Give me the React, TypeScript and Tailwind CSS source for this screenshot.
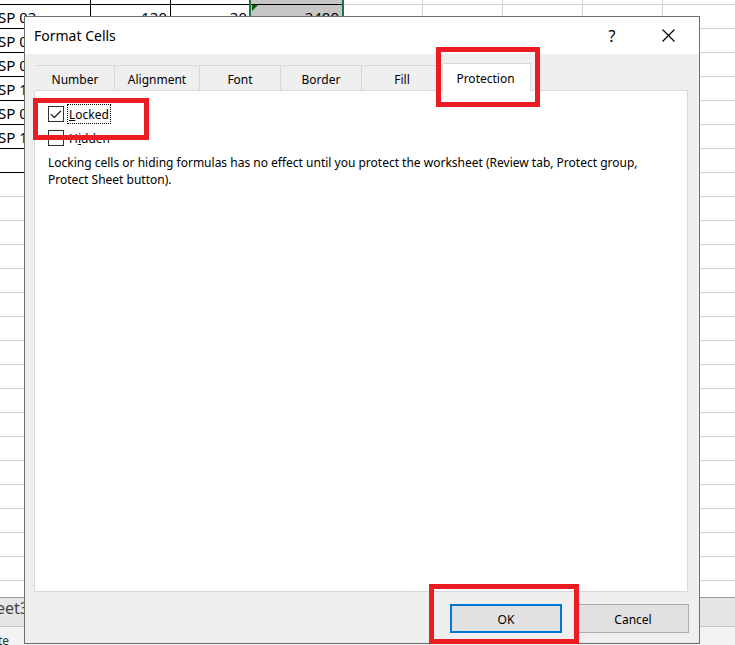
import { useState } from "react"
import clsx from "clsx"

const tabs = [
  { name: "Number", width: "w-[79px]" },
  { name: "Alignment", width: "w-[85px]" },
  { name: "Font", width: "w-[81px]" },
  { name: "Border", width: "w-[81px]" },
  { name: "Fill", width: "w-[81px]" },
  { name: "Protection", width: "w-[88px]" },
]

const codes = ["", "SP 02", "SP 0", "SP 0", "SP 1", "SP 0", "SP 1", ""]
const amounts = ["", "120"]
const prices = ["", "20"]
const totals = ["", "2400"]
const rows = Array.from({ length: 25 }, (_, i) => i)

function Mark({ className }: { className: string }) {
  return <div className={clsx("absolute z-10 border-[5px] border-[#ed1c24] pointer-events-none", className)} />
}

function Sheet() {
  return <table className="w-full table-fixed border-separate border-spacing-0 text-[15px] leading-[22px]">
    <colgroup>
      <col className="w-[91px]" />
      <col className="w-20" />
      <col className="w-20" />
      <col className="w-[92px]" />
      <col className="w-20" />
      <col className="w-20" />
      <col className="w-20" />
      <col className="w-20" />
      <col />
    </colgroup>
    <tbody>
      {rows.map(i => {
        const filled = i < codes.length
        const cell = clsx(
          "p-0 border-r border-b whitespace-nowrap",
          i === 0 ? "h-[5px]" : "h-6 pt-px",
          filled ? "border-black" : "border-[#d4d4d4]"
        )
        const empty = "p-0 border-r border-b border-[#d4d4d4]"
        return <tr key={i}>
          <td className={cell}><div className="-ml-0.5">{codes[i]}</div></td>
          <td className={clsx(cell, "text-right")}><div className="pr-[3px]">{amounts[i]}</div></td>
          <td className={clsx(cell, "text-right")}><div className="pr-[3px]">{prices[i]}</div></td>
          <td className={clsx(cell, "text-right relative", filled && "bg-[#c6c6c6]")}>
            <div className="pr-[3px]">{totals[i]}</div>
            {filled && <div className="absolute -left-0.5 -right-0.5 top-0 -bottom-px border-x-2 border-[#217346]" />}
            {i === 1 && <svg className="absolute left-px top-0" width="6" height="6"><path d="M0 0H6L0 6Z" fill="#006100" /></svg>}
          </td>
          <td className={empty}></td>
          <td className={empty}></td>
          <td className={empty}></td>
          <td className={empty}></td>
          <td className="p-0 border-b border-[#d4d4d4]"></td>
        </tr>
      })}
    </tbody>
  </table>
}

function Check({ id, checked, onChange, children }: {
  id: string, checked: boolean, onChange: (v: boolean) => void, children: React.ReactNode
}) {
  return <div className="flex items-center gap-[3px]">
    <span className="relative size-4">
      <input
        id={id}
        type="checkbox"
        className="block appearance-none size-4 bg-white border border-[#333]"
        checked={checked}
        onChange={e => onChange(e.target.checked)}
      />
      {checked && <svg className="absolute inset-0 pointer-events-none" width="16" height="16" fill="none" stroke="#333" strokeWidth="1.4">
        <path d="M3 8.2L6.3 11.5L13 4.7" />
      </svg>}
    </span>
    <label htmlFor={id} className={clsx("border border-dotted px-px pt-0.5 leading-4", checked ? "border-black" : "border-transparent")}>
      {children}
    </label>
  </div>
}

function FormatCells() {
  const [tab, setTab] = useState("Protection")
  const [locked, setLocked] = useState(true)
  const [hidden, setHidden] = useState(false)

  return <div role="dialog" aria-label="Format Cells" className="absolute z-10 left-6 right-[35px] top-4 bottom-px flex flex-col border border-[#6e6e6e] bg-[#efefef] text-xs">
    <div className="flex items-center h-[37px] shrink-0 bg-white pl-[9px] pr-[21px]">
      <h1 className="flex-1 text-sm">Format Cells</h1>
      <button className="w-5 mr-9 text-base" aria-label="Help">?</button>
      <button className="w-5 flex justify-center" aria-label="Close">
        <svg width="13" height="13" stroke="#000" strokeWidth="1.2"><path d="M0.5 0.5L12.5 12.5M12.5 0.5L0.5 12.5" /></svg>
      </button>
    </div>

    <div className="flex flex-col flex-1 pl-[9px] pr-[11px] pt-[9px] pb-[51px]">
      <div role="tablist" className="flex items-end h-[27px] pl-0.5">
        {tabs.map(t => <button
          key={t.name}
          role="tab"
          aria-selected={tab === t.name}
          onClick={() => setTab(t.name)}
          className={clsx(
            "relative border-t border-r border-[#d9d9d9]",
            t.width,
            tab === t.name ? "h-7 -mb-px pt-[3px] pr-0.5 bg-white z-[1]" : "h-[25px] pt-1"
          )}
        >
          {t.name}
          {tab === t.name && <Mark className="-left-[7px] -right-[10px] -top-[17px] -bottom-4" />}
        </button>)}
      </div>

      <div className="flex-1 bg-white border border-[#d9d9d9] px-[13px] pt-[13px]">
        <div className="relative">
          <Check id="locked" checked={locked} onChange={setLocked}><u>L</u>ocked</Check>
          <Mark className="-left-[15px] w-[116px] -top-1.5 h-[42px]" />
        </div>
        <div className="mt-1">
          <Check id="hidden" checked={hidden} onChange={setHidden}>H<u>i</u>dden</Check>
        </div>
        <p className="mt-1.5 leading-[17px]">
          Locking cells or hiding formulas has no effect until you protect the worksheet (Review tab, Protect group, Protect Sheet button).
        </p>
      </div>
    </div>

    <div className="absolute right-2.5 bottom-2.5 flex gap-[15px]">
      <div className="relative">
        <button className="block w-28 h-[29px] pt-0.5 border-2 border-[#0078d7] bg-[#e1e1e1]">OK</button>
        <Mark className="-left-[21px] -right-[17px] -top-5 -bottom-[11px]" />
      </div>
      <button className="w-28 h-[29px] pt-0.5 border border-[#adadad] bg-[#e1e1e1]">Cancel</button>
    </div>
  </div>
}

export default function App() {
  return <div className="relative h-screen flex flex-col overflow-hidden bg-white text-black font-['Noto_Sans',sans-serif]">
    <div className="flex-1 min-h-0 overflow-hidden">
      <Sheet />
    </div>
    <div className="h-[30px] shrink-0 border-t border-t-[#999] border-b border-b-[#c6c6c6] bg-[#e6e6e6]">
      <div className="-ml-1 text-base leading-5 text-[#444]">eet3</div>
    </div>
    <div className="h-[18px] shrink-0 bg-[#f3f3f3] overflow-hidden">
      <div className="-ml-0.5 text-xs leading-[27px] text-[#333]">te</div>
    </div>

    <FormatCells />
  </div>
}
